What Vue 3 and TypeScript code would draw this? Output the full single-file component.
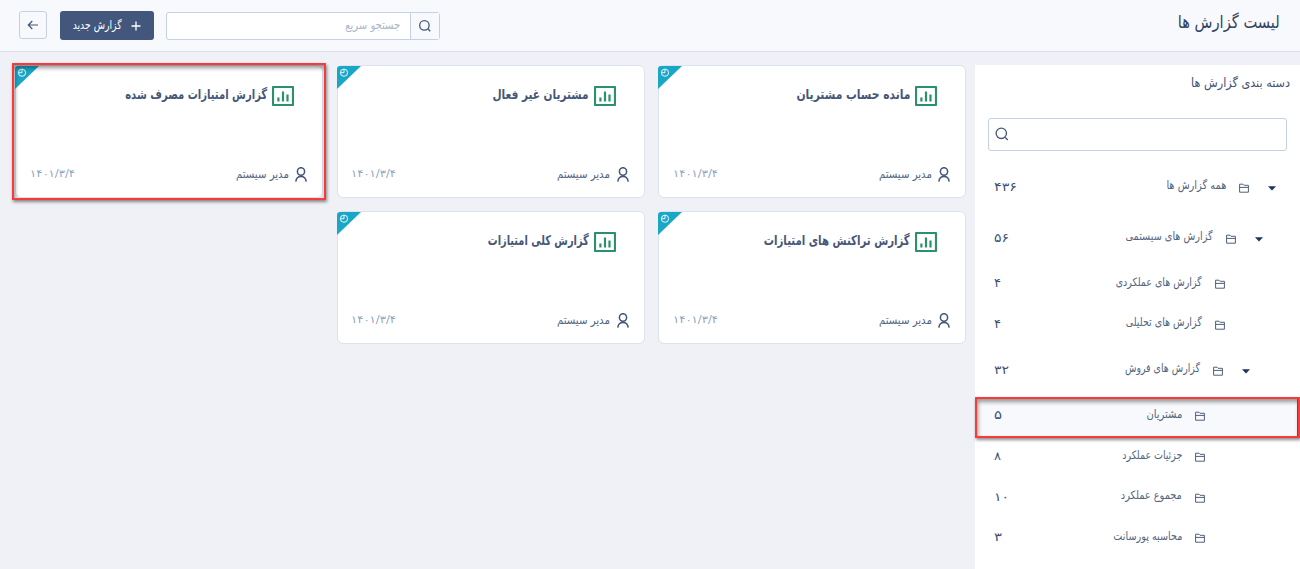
<script setup lang="ts">
import type { ObjectDirective } from 'vue'

interface Report {
  title: string
  width: number
  marked?: boolean
}

interface Category {
  label: string
  width: number
  count: string
  countWidth: number
  inset: number
  parent?: boolean
  active?: boolean
}

// Condenses or expands a label horizontally so that it takes the given width.
const vFit: ObjectDirective<HTMLElement, number> = {
  mounted(el, binding) {
    const natural = el.getBoundingClientRect().width
    if (natural > 0) el.style.transform = `scaleX(${binding.value / natural})`
  },
}

const reports: Report[] = [
  { title: 'مانده حساب مشتریان', width: 114 },
  { title: 'مشتریان غیر فعال', width: 96 },
  { title: 'گزارش امتیازات مصرف شده', width: 142, marked: true },
  { title: 'گزارش تراکنش های امتیازات', width: 146 },
  { title: 'گزارش کلی امتیازات', width: 101 },
]

const categories: Category[] = [
  { label: 'همه گزارش ها', width: 60, count: '۴۳۶', countWidth: 23, inset: 24.5, parent: true },
  { label: 'گزارش های سیستمی', width: 87, count: '۵۶', countWidth: 15, inset: 37.5, parent: true },
  { label: 'گزارش های عملکردی', width: 86, count: '۴', countWidth: 7, inset: 75 },
  { label: 'گزارش های تحلیلی', width: 76, count: '۴', countWidth: 7, inset: 75 },
  { label: 'گزارش های فروش', width: 75, count: '۳۲', countWidth: 15, inset: 50.5, parent: true },
  { label: 'مشتریان', width: 36, count: '۵', countWidth: 8, inset: 95, active: true },
  { label: 'جزئیات عملکرد', width: 60, count: '۸', countWidth: 7, inset: 95 },
  { label: 'مجموع عملکرد', width: 61, count: '۱۰', countWidth: 15, inset: 95 },
  { label: 'محاسبه پورسانت', width: 69, count: '۳', countWidth: 8, inset: 95 },
]
</script>

<template>
  <div class="page" dir="rtl">
    <header class="topbar">
      <h1 v-fit="102" class="fit">لیست گزارش ها</h1>
      <div class="tools">
        <div class="quick">
          <span class="quick-btn">
            <svg width="14" height="14" viewBox="0 0 14 14"><circle cx="6.4" cy="6.4" r="4.7" /><path d="M9.8 9.8L12.3 12.3" /></svg>
          </span>
          <span class="quick-input"><span v-fit="55" class="fit">جستجو سریع</span></span>
        </div>
        <button class="new">
          <svg width="10" height="10" viewBox="0 0 10 10"><path d="M5 .5V9.5M.5 5H9.5" /></svg>
          <span v-fit="49" class="fit">گزارش جدید</span>
        </button>
        <button class="back">
          <svg width="12" height="12" viewBox="0 0 12 12"><path d="M11 6H1.5M5.3 2L1.3 6L5.3 10" /></svg>
        </button>
      </div>
    </header>

    <div class="body">
      <aside class="side">
        <h2 v-fit="99" class="fit">دسته بندی گزارش ها</h2>
        <div class="side-search">
          <svg width="14" height="14" viewBox="0 0 14 14"><circle cx="6.3" cy="6.3" r="5.2" /><path d="M10.3 10.5L12.8 13" /></svg>
        </div>
        <ul>
          <li
            v-for="c in categories"
            :key="c.label"
            :class="{ parent: c.parent, active: c.active }"
            :style="{ paddingRight: c.inset + 'px' }"
          >
            <svg v-if="c.parent" class="caret" width="8" height="5" viewBox="0 0 8 5"><path d="M0 .3H8L4 4.5Z" /></svg>
            <svg class="folder" width="10" height="10" viewBox="0 0 10 10">
              <path d="M.6 9.2V1.2H4L5 2.3H9.4V9.2ZM.6 4.4H9.4" />
            </svg>
            <span v-fit="c.width" class="label fit">{{ c.label }}</span>
            <span v-fit="c.countWidth" class="count fit-left">{{ c.count }}</span>
            <i v-if="c.active" class="mark"></i>
          </li>
        </ul>
      </aside>

      <main class="grid">
        <article v-for="r in reports" :key="r.title" class="card">
          <svg class="corner" width="24" height="23" viewBox="0 0 24 23">
            <path class="flag" d="M0 23V3Q0 0 3 0H24Z" />
            <circle cx="7" cy="6.7" r="3.6" />
            <path class="hand" d="M7 3.1V6.7H3.6" />
          </svg>
          <div class="head">
            <svg width="22" height="20" viewBox="0 0 22 20">
              <rect x="1" y="1" width="20" height="18" rx=".4" />
              <path d="M6.4 15.5V11.5M11 15.5V5.5M15.5 15.5V8.5" />
            </svg>
            <h3 v-fit="r.width" class="fit">{{ r.title }}</h3>
          </div>
          <div class="foot">
            <svg width="12" height="15" viewBox="0 0 12 15"><ellipse cx="6" cy="4.5" rx="3.6" ry="3.8" /><path d="M.8 14.6C1.2 11.2 3.3 9.6 6 9.6S10.8 11.2 11.2 14.6" /></svg>
            <span v-fit="53" class="user fit">مدیر سیستم</span>
            <span v-fit="45" class="date fit-left">۱۴۰۱/۳/۴</span>
          </div>
          <i v-if="r.marked" class="mark"></i>
        </article>
      </main>
    </div>
  </div>
</template>

<style>
html,
body {
  margin: 0;
  overflow: hidden;
}
</style>

<style scoped>
* {
  box-sizing: border-box;
}
.page {
  width: 1300px;
  height: 569px;
  display: flex;
  flex-direction: column;
  background: #eff1f6;
  font-family: 'DejaVu Sans', 'Noto Sans', sans-serif;
  color: #3f5173;
  overflow: hidden;
}
svg {
  display: block;
  flex: none;
  fill: none;
  stroke: #435678;
}
.fit,
.fit-left {
  display: block;
  flex: none;
  white-space: nowrap;
  transform-origin: right center;
}
.fit-left {
  transform-origin: left center;
}
h1,
h2,
h3 {
  margin: 0;
}
.topbar {
  flex: none;
  height: 52px;
  display: flex;
  justify-content: space-between;
  background: #f8f9fc;
  border-bottom: 1px solid #d9e0ea;
  padding: 0 20px 0 19px;
}
h1 {
  height: 24px;
  margin-top: 10px;
  font-size: 17.5px;
  line-height: 24px;
  font-weight: 400;
  color: #34415f;
}
.tools {
  display: flex;
  align-items: flex-start;
  padding-top: 11px;
}
.quick {
  width: 274px;
  height: 28px;
  margin: 1px 0 0 12px;
  display: flex;
  border: 1px solid #c3d1e2;
  border-radius: 3px;
  background: #fff;
}
.quick-btn {
  width: 29px;
  display: flex;
  align-items: center;
  justify-content: center;
  background: #f8f9fc;
  border-left: 1px solid #c3d1e2;
}
.quick-btn svg,
.side-search svg {
  stroke-width: 1.3;
}
.quick-input {
  padding: 0 10px;
  font-size: 11.5px;
  line-height: 25px;
  color: #a9b6c9;
}
button {
  font-family: inherit;
}
.new {
  width: 94px;
  height: 29px;
  margin-left: 13px;
  padding: 0 13px 0 0;
  display: flex;
  align-items: center;
  gap: 9px;
  border: 0;
  border-radius: 3px;
  background: #42577b;
  color: #fff;
  font-size: 11.5px;
}
.new svg {
  stroke: #fff;
  stroke-width: 1.3;
  margin-top: 1px;
}
.new span {
  margin-top: -2px;
}
.back {
  width: 28px;
  height: 28px;
  padding: 0;
  display: flex;
  align-items: center;
  justify-content: center;
  border: 1px solid #c3d1e2;
  border-radius: 3px;
  background: #f8f9fc;
}
.back svg {
  stroke-width: 1.2;
}
.body {
  flex: 1;
  display: flex;
  gap: 9px;
  padding-top: 13px;
}
.side {
  width: 325px;
  flex: none;
  background: #fff;
  padding-top: 8px;
}
h2 {
  width: max-content;
  height: 20px;
  margin-right: 10px;
  font-size: 12.5px;
  line-height: 20px;
  font-weight: 400;
}
.side-search {
  height: 33px;
  margin: 25px 13px 11px;
  padding-left: 6px;
  padding-bottom: 1px;
  display: flex;
  align-items: center;
  justify-content: flex-end;
  border: 1px solid #c3d1e2;
  border-radius: 3px;
}
ul {
  list-style: none;
  margin: 0;
  padding: 0;
}
li {
  position: relative;
  height: 40.6px;
  display: flex;
  align-items: center;
  padding-left: 19px;
}
li.parent {
  height: 51px;
}
li.active {
  background: linear-gradient(#f8f9fc, #f8f9fc) 0 1px no-repeat;
}
.caret {
  margin: 2px 0 0 18.5px;
  fill: #1c355e;
  stroke: none;
}
.folder {
  margin-left: 13px;
  stroke: #4f5f7c;
}
.label {
  height: 18px;
  line-height: 18px;
  margin-top: -5px;
  font-size: 11.5px;
  color: #52657f;
}
.count {
  margin-right: auto;
  font-size: 12px;
  line-height: 16px;
  margin-top: -2px;
}
.grid {
  width: 951px;
  height: 280px;
  flex: none;
  display: grid;
  grid-template-columns: repeat(3, 308px);
  grid-template-rows: 133px 133px;
  gap: 13px 13.5px;
}
.card {
  position: relative;
  display: flex;
  flex-direction: column;
  justify-content: space-between;
  background: #fff;
  border: 1px solid #dbe3ee;
  border-radius: 6px;
}
.corner {
  position: absolute;
  left: -1px;
  top: 0;
  stroke: #fff;
  stroke-width: 0.9;
}
.corner .flag {
  fill: #1aa7c7;
  stroke: none;
}
.head {
  display: flex;
  align-items: flex-start;
  gap: 5px;
  padding: 20px 28px 0 0;
}
.head svg {
  stroke: #2a916b;
  stroke-width: 2.2;
}
h3 {
  height: 22px;
  margin-top: -3px;
  font-size: 13.5px;
  line-height: 22px;
  font-weight: 700;
  color: #465778;
}
.foot {
  display: flex;
  align-items: center;
  padding: 0 15px 15px 14px;
}
.foot svg {
  stroke-width: 1.5;
}
.user {
  margin-right: 6.5px;
  margin-top: -1px;
  font-size: 11.5px;
  line-height: 16px;
  color: #52657f;
}
.date {
  margin-right: auto;
  margin-left: -0.5px;
  margin-top: -2px;
  font-size: 10px;
  line-height: 14px;
  color: #8da3c0;
}
.mark {
  position: absolute;
  z-index: 2;
  border: 2px solid #f93a3a;
  box-shadow: 1px 2px 3px rgba(0, 0, 0, 0.45), inset 1px 3px 4px rgba(0, 0, 0, 0.4);
}
.card .mark {
  inset: -3px -4px -3px -4px;
}
li .mark {
  inset: 1px 0 -1px 0;
  box-shadow: 1px 2px 3px rgba(0, 0, 0, 0.45), inset -1px 0 0 #42577b, inset 1px 3px 4px rgba(0, 0, 0, 0.4);
}
</style>
